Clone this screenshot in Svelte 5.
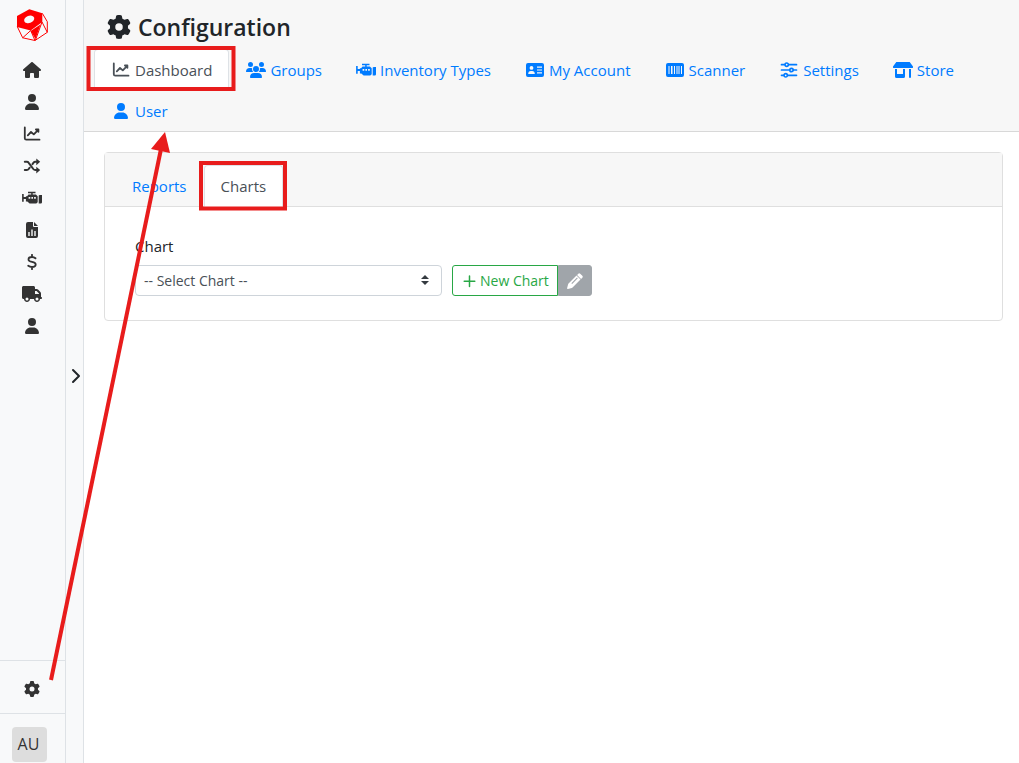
<script lang="ts">
    type Icon = { box: string; fill?: string; line?: string; stroke?: number };

    const icons: Record<string, Icon> = {
        home: {
            box: '-32 0 640 512',
            fill: 'M575.8 255.5c0 18-15 32.1-32 32.1h-32V472c0 22.1-17.9 40-40 40H392c-22.1 0-40-17.9-40-40v-88c0-17.7-14.3-32-32-32h-64c-17.7 0-32 14.3-32 32v88c0 22.1-17.9 40-40 40h-80c-22.1 0-40-17.9-40-40V287.6H32c-18 0-32-14-32-32.1c0-9 3-17 10-24L266.4 8c7-7 15-8 22-8s15 2 21 7l255.5 224.5c8 7 12 15 11 24z',
        },
        user: {
            box: '-96 0 640 512',
            fill: 'M224 256A128 128 0 1 0 224 0a128 128 0 1 0 0 256zm-45.7 48C79.8 304 0 383.8 0 482.3C0 498.7 13.3 512 29.7 512h388.6c16.4 0 29.7-13.3 29.7-29.7C448 383.8 368.2 304 269.7 304h-91.4z',
        },
        gear: {
            box: '0 0 512 512',
            fill: 'M495.9 166.6c3.2 8.7 .5 18.4-6.4 24.6l-43.3 39.4c1.1 8.3 1.7 16.8 1.7 25.4s-.6 17.1-1.7 25.4l43.3 39.4c6.9 6.2 9.6 15.9 6.4 24.6c-4.4 11.9-9.7 23.3-15.8 34.3l-4.7 8.1c-6.6 11-14 21.4-22.1 31.2c-5.9 7.2-15.7 9.6-24.5 6.8l-55.7-17.7c-13.4 10.3-28.2 18.9-44 25.4l-12.5 57.1c-2 9.1-9 16.3-18.2 17.8c-13.8 2.3-28 3.5-42.5 3.5s-28.7-1.2-42.5-3.5c-9.2-1.5-16.2-8.7-18.2-17.8l-12.5-57.1c-15.8-6.5-30.6-15.1-44-25.4L83.1 425.9c-8.8 2.8-18.6 .3-24.5-6.8c-8.1-9.8-15.5-20.2-22.1-31.2l-4.7-8.1c-6.1-11-11.4-22.4-15.8-34.3c-3.2-8.7-.5-18.4 6.4-24.6l43.3-39.4C64.6 273.1 64 264.6 64 256s.6-17.1 1.7-25.4L22.4 191.2c-6.9-6.2-9.6-15.9-6.4-24.6c4.4-11.9 9.7-23.3 15.8-34.3l4.7-8.1c6.6-11 14-21.4 22.1-31.2c5.9-7.2 15.7-9.6 24.5-6.8l55.7 17.7c13.4-10.3 28.2-18.9 44-25.4l12.5-57.1c2-9.1 9-16.3 18.2-17.8C227.3 1.2 241.5 0 256 0s28.7 1.2 42.5 3.5c9.2 1.5 16.2 8.7 18.2 17.8l12.5 57.1c15.8 6.5 30.6 15.1 44 25.4l55.7-17.7c8.8-2.8 18.6-.3 24.5 6.8c8.1 9.8 15.5 20.2 22.1 31.2l4.7 8.1c6.1 11 11.4 22.4 15.8 34.3zM256 336a80 80 0 1 0 0-160 80 80 0 1 0 0 160z',
        },
        truck: {
            box: '0 0 640 512',
            fill: 'M48 0C21.5 0 0 21.5 0 48V368c0 26.5 21.5 48 48 48H64c0 53 43 96 96 96s96-43 96-96H384c0 53 43 96 96 96s96-43 96-96h32c17.7 0 32-14.3 32-32s-14.3-32-32-32V237.3c0-17-6.7-33.3-18.7-45.3L512 114.7c-12-12-28.3-18.7-45.3-18.7H416V48c0-26.5-21.5-48-48-48H48zM416 160h50.7L544 237.3V256H416V160zM112 416a48 48 0 1 1 96 0 48 48 0 1 1-96 0zm368-48a48 48 0 1 1 0 96 48 48 0 1 1 0-96z',
        },
        chart: {
            box: '0 0 20 16',
            line: 'M2.8 1.5v10.7q0 1.5 1.5 1.5H17.5M5.8 9.3L9 6l2.8 2.4 4.4-4.6M13.9 3.5h2.5v2.3',
            stroke: 1.8,
        },
        shuffle: {
            box: '0 0 20 16',
            line: 'M2.8 3.8h2q1.200 0 1.900 1l4.600 6.200q.8 1 2 1H15.500M2.800 12h2q1.200 0 1.900-1l1-1.300M10.500 6.100l.9-1.300q.8-1 2-1h2.100',
            fill: 'M14.300 .5L18.200 3.800l-3.900 3.400zM14.300 8.700L18.200 12l-3.900 3.400z',
            stroke: 2,
        },
        engine: {
            box: '0 0 20 16',
            fill: 'M6 1.800h7.500v1.500h-2.800v1.100h3.200l1.800 1.900v5.900l-1.400 1.400H7.600L5.300 11.600H3.900V9H1.700v2.700H.1V4h1.600v3h2.200V6.200h1.200l1.400-1.800h2.700V3.300H6zM6.600 7v1.700h1.700V7zM9.400 7v1.700H11V7zM12.100 7v1.700h1.700V7zM16.700 5.500l1-.5h2.300v7.500l-.7 1h-2.600z',
        },
        report: {
            box: '0 0 20 16',
            fill: 'M4 2q0-2 2-2h5v4q0 1 1 1h4v9q0 2-2 2H6q-2 0-2-2zM12 0l4 4h-4zM6.300 10v4h1.400v-4zM9.300 7.500V14h1.400V7.500zM12.300 9v5h1.400V9z',
        },
        dollar: {
            box: '0 0 20 16',
            line: 'M10 .8v1.800M10 13.400v1.800M13.500 4.300Q12 3 10 3C7.800 3 6.500 4 6.500 5.400C6.500 9 13.700 6.700 13.700 10.500C13.700 12 12.200 13 10 13Q7.900 13 6.200 11.700',
            stroke: 1.800,
        },
        groups: {
            box: '0 0 20 16',
            fill: 'M4.500 5a2.500 2.500 0 1 0 0-5a2.500 2.500 0 1 0 0 5zM15.500 5a2.500 2.500 0 1 0 0-5a2.500 2.500 0 1 0 0 5zM10 10a3 3 0 1 0 0-6a3 3 0 1 0 0 6zM0 9.500Q.2 6 3.500 6h1.700q.5 0 1 .2Q5.700 8.500 7.200 10H.6Q0 10 0 9.500zM20 9.500Q19.800 6 16.500 6h-1.700q-.5 0-1 .2q.5 2.300-1 3.800h6.600q.6 0 .6-.5zM4 15.200Q4.200 11 8.200 11h3.600q4 0 4.200 4.200q0 .8-.8.8H4.800Q4 16 4 15.200z',
        },
        card: {
            box: '0 0 20 16',
            fill: 'M1 3q0-2 2-2h14q2 0 2 2v10q0 2-2 2H3q-2 0-2-2zM6.500 7.800a1.900 1.900 0 1 0 0-3.800a1.900 1.900 0 1 0 0 3.800zM3.200 12h6.600q0-2.900-2.700-2.900H5.900Q3.200 9.100 3.200 12zM12 4.600v1.200h5V4.600zM12 7.400v1.200h5V7.400zM12 10.200v1.200h5v-1.200z',
        },
        scanner: {
            box: '0 0 20 16',
            fill: 'M1 3q0-2 2-2h14q2 0 2 2v10q0 2-2 2H3q-2 0-2-2zM3.500 4v8h1V4zM6 4v8h1.500V4zM9 4v8h1V4zM11.500 4v8h1V4zM13.500 4v8h1V4zM16 4v8h1V4z',
        },
        sliders: {
            box: '0 0 20 16',
            line: 'M2.500 2.700H6M9.500 2.700h8M2.500 8h8.300M14.300 8h3.200M2.500 13.300H5M8.500 13.300h9M6 2.700a1.700 1.700 0 1 0 3.400 0a1.700 1.700 0 1 0-3.400 0M10.800 8a1.700 1.700 0 1 0 3.400 0a1.700 1.700 0 1 0-3.400 0M5 13.300a1.700 1.700 0 1 0 3.400 0a1.700 1.700 0 1 0-3.400 0',
            stroke: 1.700,
        },
        store: {
            box: '0 0 20 16',
            fill: 'M3.300 0h13.400L20 4.500q.3 1.500-1 1.500H1Q-.3 6 0 4.500zM2 7h2v5h6V7h2v7.500q0 1.500-1.500 1.500h-7Q2 16 2 14.500zM16 7h2v8q0 1-1 1t-1-1z',
        },
        plus: { box: '0 0 16 16', line: 'M8.500 3v10.500M3.200 8.200h10.600', stroke: 1.500 },
        pencil: {
            box: '0 0 512 512',
            fill: 'M362 22q28-28 60 0l68 68q28 32 0 60l-40 40L322 62zM304 80l128 128-254 254q-10 10-24 14L30 510Q0 514 2 484l34-126q4-12 14-22zM320 144L140 324l24 24L344 168z',
        },
        chevron: { box: '0 0 10 16', line: 'M2 2l6 6-6 6', stroke: 2 },
    };

    const sideLinks = [
        ['home', 'Home'],
        ['user', 'Customers'],
        ['chart', 'Dashboard'],
        ['shuffle', 'Transfers'],
        ['engine', 'Inventory'],
        ['report', 'Reports'],
        ['dollar', 'Sales'],
        ['truck', 'Vehicles'],
        ['user', 'Users'],
    ];

    const tabs = [
        ['chart', 'Dashboard'],
        ['groups', 'Groups'],
        ['engine', 'Inventory Types'],
        ['card', 'My Account'],
        ['scanner', 'Scanner'],
        ['sliders', 'Settings'],
        ['store', 'Store'],
        ['user', 'User'],
    ];

    let activeTab = $state('Dashboard');
    let activeCard = $state('Charts');
    let chart = $state('');
</script>

{#snippet icon(name: string, size = '')}
    <svg class="icon {size}" viewBox={icons[name].box} aria-hidden="true">
        {#if icons[name].fill}
            <path d={icons[name].fill} fill="currentColor" fill-rule="evenodd" />
        {/if}
        {#if icons[name].line}
            <path
                d={icons[name].line}
                fill="none"
                stroke="currentColor"
                stroke-width={icons[name].stroke}
                stroke-linecap="round"
                stroke-linejoin="round"
            />
        {/if}
    </svg>
{/snippet}

<div class="app">
    <aside class="sidebar">
        <a class="logo" href="#home" aria-label="Start page">
            <svg viewBox="0 0 32 32" aria-hidden="true">
                <path
                    d="M1 7L13.300 .2 26.300 4.300V13L14.700 21.500 1 18zM8.300 12.200a5.200 3.600-20 1 0 9.800-3.600a5.200 3.600-20 1 0-9.800 3.600z"
                    fill="red"
                    fill-rule="evenodd"
                />
                <path d="M14.700 22L24.500 15.500 19.500 30z" fill="red" />
                <path
                    d="M1.300 17.700L6.700 28.800 19 31.500 31.300 23.300V12.700L26.300 4.300M14.700 21.500L6.700 28.800M14.700 21.500L19 31.500M26 13L31.300 23.300M26 13L19.500 31"
                    fill="none"
                    stroke="red"
                />
            </svg>
        </a>
        <nav class="side-nav" aria-label="Main">
            {#each sideLinks as [name, label]}
                <a href="#{label.toLowerCase()}" aria-label={label}>{@render icon(name)}</a>
            {/each}
        </nav>
        <a class="side-config" href="#configuration" aria-label="Configuration">
            {@render icon('gear', 'small')}
        </a>
        <div class="side-account">
            <button class="avatar" type="button">AU</button>
        </div>
    </aside>

    <button class="expand" type="button" aria-label="Expand sidebar">
        {@render icon('chevron', 'narrow')}
    </button>

    <main>
        <header>
            <h1>{@render icon('gear', 'large')}Configuration</h1>
            <nav class="tabs" aria-label="Configuration">
                {#each tabs as [name, label]}
                    <a
                        class="tab"
                        class:active={label === activeTab}
                        href="#{label.toLowerCase().replace(' ', '-')}"
                        onclick={() => (activeTab = label)}
                    >
                        {@render icon(name)}{label}
                    </a>
                {/each}
            </nav>
        </header>

        <section class="card">
            <nav class="card-tabs" aria-label="Dashboard">
                {#each ['Reports', 'Charts'] as label}
                    <a
                        class="tab"
                        class:active={label === activeCard}
                        href="#{label.toLowerCase()}"
                        onclick={() => (activeCard = label)}
                    >{label}</a>
                {/each}
            </nav>
            <div class="card-body">
                <label for="chart">Chart</label>
                <div class="controls">
                    <div class="select">
                        <select id="chart" bind:value={chart}>
                            <option value="">-- Select Chart --</option>
                        </select>
                        <svg class="caret" viewBox="0 0 8 10" aria-hidden="true">
                            <path d="M4 0l4 4H0zM0 6h8l-4 4z" fill="#343a40" />
                        </svg>
                    </div>
                    <div class="btn-group">
                        <button class="btn-new" type="button">{@render icon('plus', 'small')}New Chart</button>
                        <button class="btn-edit" type="button" aria-label="Edit chart" disabled={!chart}>
                            {@render icon('pencil', 'small')}
                        </button>
                    </div>
                </div>
            </div>
        </section>
    </main>

    <svg class="marks" width="300" height="700" aria-hidden="true">
        <g fill="none" stroke="#e81c1c" stroke-width="4">
            <rect x="88.500" y="48" width="145" height="41" />
            <rect x="201" y="163" width="84" height="45.500" />
            <path d="M51 680L161 149" />
        </g>
        <path d="M165 132L170 153 151 149z" fill="#e81c1c" />
    </svg>
</div>

<style>
    :global(body) {
        margin: 0;
        background: #fff;
    }

    .app {
        position: relative;
        display: flex;
        min-height: 100vh;
        color: #212529;
        font: 15px/24px 'Segoe UI', 'Open Sans', 'Noto Sans', sans-serif;
    }

    a {
        color: #007bff;
        text-decoration: none;
    }

    button,
    select {
        font: inherit;
        cursor: pointer;
    }

    .icon {
        display: block;
        flex: none;
        width: 20px;
        height: 16px;
    }

    .icon.small {
        width: 16px;
    }

    .icon.narrow {
        width: 10px;
    }

    .icon.large {
        width: 24px;
        height: 24px;
    }

    .sidebar {
        box-sizing: border-box;
        display: flex;
        flex: none;
        flex-direction: column;
        width: 66px;
        background: #f8f9fa;
        border-right: 1px solid #dee2e6;
    }

    .logo {
        padding: 9px 0 13px 16px;
    }

    .logo svg {
        display: block;
        width: 32px;
        height: 32px;
    }

    .side-nav {
        flex: 1;
    }

    .side-nav a,
    .side-config {
        display: flex;
        align-items: center;
        justify-content: center;
        height: 32px;
        padding-right: 1px;
        color: #333;
    }

    .side-config {
        height: 48px;
        padding-top: 4px;
        border-top: 1px solid #dee2e6;
        border-bottom: 1px solid #dee2e6;
    }

    .side-account {
        padding: 13px 12px 1px;
    }

    .avatar {
        display: block;
        width: 35px;
        height: 35px;
        padding: 0 2px 2px 0;
        color: #333;
        background: #ddd;
        border: 0;
        border-radius: 4px;
        font-size: 16px;
    }

    .expand {
        display: flex;
        flex: none;
        align-items: center;
        justify-content: center;
        box-sizing: border-box;
        width: 18px;
        padding: 0 0 11px 2px;
        color: #212529;
        background: #f8f9fa;
        border: 0;
        border-right: 1px solid #dee2e6;
    }

    main {
        flex: 1;
        min-width: 0;
    }

    header {
        padding: 8px 10px 0;
        background: #f7f7f7;
        border-bottom: 1px solid #d8d8d8;
    }

    h1 {
        display: flex;
        gap: 7px;
        align-items: center;
        margin: 0;
        padding: 0 13px 3px;
        font-size: 23px;
        font-weight: 600;
        line-height: 38px;
    }

    .tabs,
    .card-tabs {
        display: flex;
        flex-wrap: wrap;
    }

    .tab {
        display: flex;
        gap: 4px;
        align-items: center;
        margin-bottom: -1px;
        padding: 8px 16px;
        border: 1px solid transparent;
        border-radius: 4px 4px 0 0;
    }

    .tab.active {
        color: #495057;
        background: #fff;
        border-color: #dee2e6 #dee2e6 #fff;
    }

    .card {
        margin: 20px 16px 20px 20px;
        border: 1px solid #dfdfdf;
        border-radius: 4px;
    }

    .card-tabs {
        padding: 12px 10px 0;
        background: #f7f7f7;
        border-bottom: 1px solid #dfdfdf;
    }

    .card-body {
        padding: 27px 30px 24px;
    }

    label {
        display: block;
        margin-bottom: 7px;
    }

    .controls {
        display: flex;
        gap: 10px;
        font-size: 14px;
        line-height: 20px;
    }

    .select {
        position: relative;
        width: 307px;
    }

    select {
        display: block;
        box-sizing: border-box;
        width: 100%;
        height: 31px;
        padding: 0 24px 0 8px;
        color: #495057;
        background: #fff;
        border: 1px solid #ced4da;
        border-radius: 4px;
        appearance: none;
    }

    .caret {
        position: absolute;
        top: 10px;
        right: 13px;
        width: 8px;
        height: 10px;
        pointer-events: none;
    }

    .btn-group {
        display: flex;
    }

    .btn-new,
    .btn-edit {
        display: flex;
        gap: 3px;
        align-items: center;
        height: 31px;
        padding: 0 8px;
        color: #28a745;
        background: #fff;
        border: 1px solid #28a745;
        border-radius: 3px 0 0 3px;
    }

    .btn-edit {
        color: #fff;
        background: #a0a5aa;
        border-color: #a0a5aa;
        border-radius: 0 3px 3px 0;
    }

    .marks {
        position: absolute;
        top: 0;
        left: 0;
        pointer-events: none;
    }
</style>
